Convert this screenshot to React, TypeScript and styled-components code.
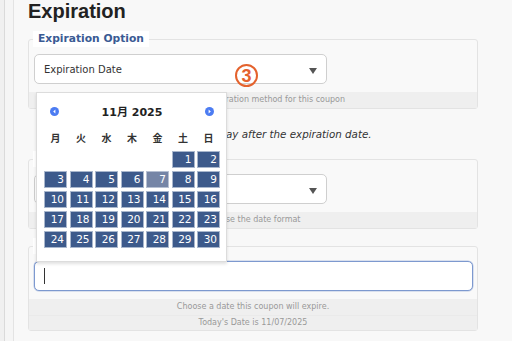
import React from "react";
import styled, { createGlobalStyle } from "styled-components";

const GlobalStyle = createGlobalStyle`
  html, body { margin: 0; padding: 0; }
  body {
    background: #f8f8f8;
    font-family: "DejaVu Sans", "Noto Sans CJK JP", sans-serif;
    color: #333;
    width: 512px;
    height: 341px;
    overflow: hidden;
  }
`;

const Page = styled.div`
  position: relative;
  display: flex;
  width: 512px;
  height: 341px;
`;

const RailOuter = styled.div`
  width: 4px;
  background: #f0f0f0;
  border-right: 1px solid #dadada;
`;

const RailInner = styled.div`
  width: 8px;
  background: #f5f5f5;
  border-right: 1px solid #e3e3e3;
`;

const Main = styled.main`
  padding-left: 14px;
  width: 450px;
  display: flex;
  flex-direction: column;
`;

const Title = styled.h1`
  margin: 0 0 9px;
  font-family: "Liberation Sans", Arial, sans-serif;
  font-weight: bold;
  font-size: 20px;
  line-height: 22px;
  color: #222;
`;

const Fieldset = styled.fieldset<{ $gap?: number }>`
  margin: 0 0 ${(p) => p.$gap ?? 0}px;
  padding: 0;
  min-width: 0;
  border: 1px solid #e3e3e3;
  border-radius: 3px;
  background: #f9f9f9;
`;

const Legend = styled.legend`
  margin-left: 4px;
  padding: 0 5px;
  background: #fff;
  font-size: 10.7px;
  font-weight: bold;
  line-height: 16px;
  color: #3a5b94;
`;

const FieldBody = styled.div`
  padding: 7px 5px 8px;
`;

const SelectBox = styled.div`
  position: relative;
  display: flex;
  align-items: center;
  box-sizing: border-box;
  width: 293px;
  height: 30px;
  padding-left: 9px;
  background: #fff;
  border: 1px solid #cfcfcf;
  border-radius: 5px;
  font-size: 10px;
  color: #333;
`;

const Caret = styled.span`
  position: absolute;
  right: 9px;
  top: 13px;
  width: 0;
  height: 0;
  border-left: 4px solid transparent;
  border-right: 4px solid transparent;
  border-top: 6px solid #555;
`;

const DateInput = styled.div`
  display: flex;
  align-items: center;
  box-sizing: border-box;
  height: 30px;
  margin-right: -1px;
  padding-left: 9px;
  background: #fff;
  border: 1px solid #7d99cf;
  border-radius: 5px;
  box-shadow: 0 0 0 0.5px rgba(125, 153, 207, 0.5);
`;

const TextCursor = styled.span`
  width: 1px;
  height: 16px;
  background: #333;
`;

const Help = styled.div`
  background: #efefef;
  text-align: center;
  font-size: 8px;
  line-height: 16px;
  color: #999;
`;

const HelpLine = styled.div<{ $divided?: boolean }>`
  line-height: 15.5px;
  ${(p) => (p.$divided ? "border-top: 1px solid #eaeaea; line-height: 14.5px;" : "")}
`;

const Note = styled.p`
  margin: 18px 0 10px 18px;
  font-size: 10.3px;
  font-style: italic;
  line-height: 14px;
  color: #333;
  white-space: nowrap;
`;

const Badge = styled.span`
  position: absolute;
  left: 235px;
  top: 64px;
  box-sizing: border-box;
  width: 23px;
  height: 23px;
  border: 2px solid #e4622d;
  border-radius: 50%;
  display: flex;
  align-items: center;
  justify-content: center;
  font-family: "Liberation Sans", Arial, sans-serif;
  font-weight: bold;
  font-size: 18px;
  line-height: 1;
  color: #e4622d;
`;

const Calendar = styled.div`
  position: absolute;
  left: 36px;
  top: 92px;
  box-sizing: border-box;
  width: 191px;
  padding: 8px 6px 13px 7px;
  background: #fff;
  border: 1px solid #dcdcdc;
  box-shadow: 0 2px 3px rgba(0, 0, 0, 0.12);
`;

const CalHeader = styled.div`
  display: flex;
  align-items: center;
  justify-content: space-between;
  height: 20px;
  padding: 0 6px 0 6px;
`;

const CalTitle = styled.div`
  font-size: 11px;
  font-weight: bold;
  color: #222;
`;

const NavButton = styled.span`
  display: flex;
  width: 9px;
  height: 9px;
`;

const DayNames = styled.div`
  display: grid;
  grid-template-columns: repeat(7, 1fr);
  column-gap: 2.5px;
  margin-top: 7px;
  height: 20px;
  align-items: center;
`;

const DayName = styled.span`
  text-align: center;
  font-size: 10px;
  font-weight: bold;
  line-height: 20px;
  padding-top: 1px;
  color: #333;
`;

const DayGrid = styled.div`
  display: grid;
  grid-template-columns: repeat(7, 1fr);
  column-gap: 2.5px;
  row-gap: 3px;
  margin-top: 3px;
`;

const DayCell = styled.span<{ $active?: boolean }>`
  box-sizing: border-box;
  height: 17px;
  padding-right: 2px;
  text-align: right;
  font-size: 10.5px;
  line-height: 15px;
  color: #fff;
  background: ${(p) => (p.$active ? "#7585a6" : "#3d5a8b")};
  border: 1px solid ${(p) => (p.$active ? "#b6c0d2" : "#a9b7cd")};
`;

const Blank = styled.span``;

const Arrow = ({ dir }: { dir: "prev" | "next" }) => (
  <svg width="9" height="9" viewBox="0 0 9 9">
    <circle cx="4.5" cy="4.5" r="4.5" fill="#4c7cf2" />
    {dir === "prev" ? (
      <path d="M5.4 2.6 L3.2 4.5 L5.4 6.4 Z" fill="#fff" />
    ) : (
      <path d="M3.6 2.6 L5.8 4.5 L3.6 6.4 Z" fill="#fff" />
    )}
  </svg>
);

const dayNames = ["月", "火", "水", "木", "金", "土", "日"];
const days = Array.from({ length: 30 }, (_, i) => i + 1);

export default function App() {
  return (
    <>
      <GlobalStyle />
      <Page>
        <RailOuter />
        <RailInner />
        <Main>
          <Title>Expiration</Title>
          <Fieldset>
            <Legend>Expiration Option</Legend>
            <FieldBody>
              <SelectBox>
                Expiration Date
                <Caret />
              </SelectBox>
            </FieldBody>
            <Help>Choose the expiration method for this coupon</Help>
          </Fieldset>
          <Note>Coupon expires at the end of the day after the expiration date.</Note>
          <Fieldset $gap={9}>
            <Legend>Date Format</Legend>
            <FieldBody>
              <SelectBox>
                MM/DD/YYYY
                <Caret />
              </SelectBox>
            </FieldBody>
            <Help>Choose the date format</Help>
          </Fieldset>
          <Fieldset>
            <Legend>Expiration Date</Legend>
            <FieldBody>
              <DateInput>
                <TextCursor />
              </DateInput>
            </FieldBody>
            <Help>
              <HelpLine>Choose a date this coupon will expire.</HelpLine>
              <HelpLine $divided>Today's Date is 11/07/2025</HelpLine>
            </Help>
          </Fieldset>
        </Main>
        <Badge>3</Badge>
        <Calendar>
          <CalHeader>
            <NavButton>
              <Arrow dir="prev" />
            </NavButton>
            <CalTitle>11月 2025</CalTitle>
            <NavButton>
              <Arrow dir="next" />
            </NavButton>
          </CalHeader>
          <DayNames>
            {dayNames.map((d) => (
              <DayName key={d}>{d}</DayName>
            ))}
          </DayNames>
          <DayGrid>
            {Array.from({ length: 5 }, (_, i) => (
              <Blank key={`b${i}`} />
            ))}
            {days.map((d) => (
              <DayCell key={d} $active={d === 7}>
                {d}
              </DayCell>
            ))}
          </DayGrid>
        </Calendar>
      </Page>
    </>
  );
}
